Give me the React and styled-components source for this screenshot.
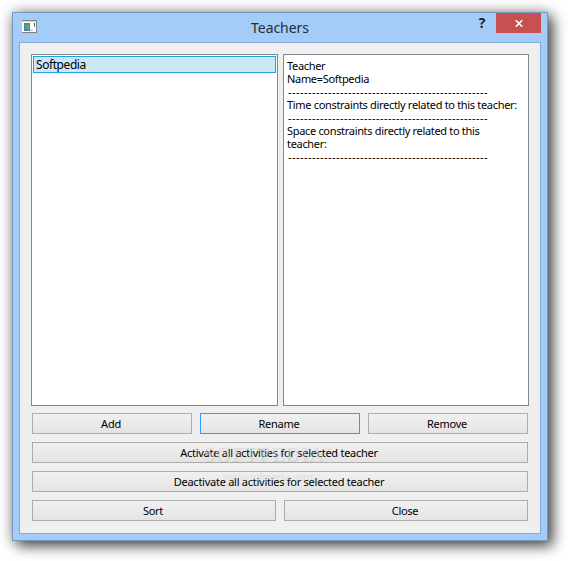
import styled, { createGlobalStyle } from "styled-components";

const GlobalStyle = createGlobalStyle`
  * {
    box-sizing: border-box;
  }

  body {
    margin: 0;
    background: #fff;
    overflow: hidden;
  }
`;

const Desktop = styled.main`
  width: 568px;
  height: 561px;
  padding: 12px;
  font-family: "Noto Sans", "Open Sans", sans-serif;
  font-size: 11px;
  color: #000;
  overflow: hidden;
`;

const Window = styled.section`
  width: 536px;
  height: 529px;
  padding: 0 6px 6px;
  display: flex;
  flex-direction: column;
  background: #a3ccf9;
  border: 1px solid #7798bf;
  box-shadow: 5px 5px 13px 0 rgba(0, 0, 0, 0.65), 0 0 13px rgba(0, 0, 0, 0.3);
`;

const TitleBar = styled.header`
  height: 29px;
  flex: none;
  display: grid;
  grid-template-columns: 100px 1fr 100px;
  align-items: start;
`;

const AppIcon = styled.svg`
  width: 15px;
  height: 13px;
  margin: 7px 0 0 3px;
`;

const Title = styled.h1`
  margin: 0;
  font-size: 14px;
  font-weight: 400;
  line-height: 30px;
  letter-spacing: -0.05px;
  text-align: center;
  color: #2b2b2b;
`;

const Controls = styled.div`
  display: flex;
  justify-content: flex-end;
`;

const HelpButton = styled.button`
  width: 28px;
  height: 20px;
  padding: 0;
  border: 0;
  background: none;
  color: #1e1e1e;
  font: bold 14px/20px "Open Sans", sans-serif;
`;

const CloseButton = styled(HelpButton)`
  width: 45px;
  display: flex;
  align-items: center;
  justify-content: center;
  background: #c75050;
`;

const Client = styled.div`
  flex: 1;
  padding: 11px;
  display: flex;
  flex-direction: column;
  gap: 7px;
  background: #efefef;
  border: 1px solid #86abd9;
`;

const Panes = styled.div`
  height: 352px;
  display: grid;
  grid-template-columns: 247px 246px;
  gap: 5px;
`;

const Pane = styled.div`
  padding: 1px;
  background: #fff;
  border: 1px solid #828790;
`;

const ListItem = styled.div`
  height: 17px;
  padding-left: 2px;
  background: #cbe8f6;
  border: 1px solid #26a0da;
  font-size: 12px;
  line-height: 16px;
  letter-spacing: -0.43px;
`;

const Details = styled(Pane)`
  padding: 4px 0 0 3px;
`;

const Line = styled.p`
  margin: 0;
  height: 13px;
  line-height: 13px;
  white-space: pre;
  letter-spacing: -0.32px;
`;

const Rule = styled(Line)`
  padding-left: 1px;
  letter-spacing: 0.46px;
`;

const Rows = styled.div`
  position: relative;
  padding: 0 1px;
  display: flex;
  flex-direction: column;
  gap: 8px;
`;

const Row = styled.div`
  display: flex;
  gap: 8px;
`;

const Button = styled.button`
  flex: 1;
  height: 21px;
  padding: 0 2px 0 0;
  border: 1px solid ${({ $focused }) => ($focused ? "#3399ff" : "#acacac")};
  background: linear-gradient(#f0f0f0, #e4e4e4);
  color: #000;
  font: inherit;
  line-height: 19px;
  letter-spacing: -0.26px;
`;

// faint embossed mark lying over the buttons
const Watermark = styled.div`
  position: absolute;
  top: 31px;
  left: 172px;
  width: 132px;
  color: rgba(245, 245, 245, 0.3);
  text-shadow: 1px 1px 0 rgba(140, 140, 140, 0.2);
  pointer-events: none;
`;

const Brand = styled.div`
  font: bold 20px/20px "Liberation Serif", serif;
  letter-spacing: 0.7px;
  white-space: nowrap;

  sup {
    font-size: 7px;
    line-height: 1;
    vertical-align: 9px;
  }
`;

const Site = styled.div`
  margin: 6px 0 0 19px;
  font: 11px/12px "Noto Sans", sans-serif;
  letter-spacing: -0.75px;
`;

const constraints = [
  ["Teacher", "Name=Softpedia"],
  ["Time constraints directly related to this teacher:"],
  ["Space constraints directly related to this", "teacher:"],
];

const App = () => {
  return (
    <Desktop>
      <GlobalStyle />
      <Window>
        <TitleBar>
          <AppIcon viewBox="0 0 15 13" shapeRendering="crispEdges">
            <path fill="#fdfdfd" d="M0 1h14v11H0z" />
            <path fill="#808080" d="M0 0h15v1H0zM14 0h1v13h-1zM0 12h15v1H0z" />
            <path fill="#d9d9d9" d="M0 1h14v1H0zM8 9h3v2H8z" />
            <path fill="#5680a8" d="M2 3h6v8H2z" />
            <path fill="#4c9a78" d="M3 4h4v6H3z" />
            <path fill="#61ad83" d="M5 5h2v4H5z" />
            <path fill="#294f9c" d="M12 3h1v2h-1z" />
            <path fill="#44a064" d="M12 5h1v2h-1z" />
          </AppIcon>
          <Title>Teachers</Title>
          <Controls>
            <HelpButton>?</HelpButton>
            <CloseButton aria-label="Close window">
              <svg width="8" height="7" viewBox="0 0 8 7">
                <path d="M.8 .3l6.4 6.4M7.2 .3L.8 6.7" stroke="#fff" strokeWidth="1.6" />
              </svg>
            </CloseButton>
          </Controls>
        </TitleBar>
        <Client>
          <Panes>
            <Pane>
              <ListItem>Softpedia</ListItem>
            </Pane>
            <Details>
              {constraints.map((lines) => (
                <div key={lines[0]}>
                  {lines.map((line) => (
                    <Line key={line}>{line}</Line>
                  ))}
                  <Rule>{"-".repeat(50)}</Rule>
                </div>
              ))}
            </Details>
          </Panes>
          <Rows>
            <Row>
              <Button>Add</Button>
              <Button $focused>Rename</Button>
              <Button>Remove</Button>
            </Row>
            <Row>
              <Button>Activate all activities for selected teacher</Button>
            </Row>
            <Row>
              <Button>Deactivate all activities for selected teacher</Button>
            </Row>
            <Row>
              <Button>Sort</Button>
              <Button>Close</Button>
            </Row>
            <Watermark>
              <Brand>
                SOFTPEDIA<sup>™</sup>
              </Brand>
              <Site>www.softpedia.com</Site>
            </Watermark>
          </Rows>
        </Client>
      </Window>
    </Desktop>
  );
};

export default App;
